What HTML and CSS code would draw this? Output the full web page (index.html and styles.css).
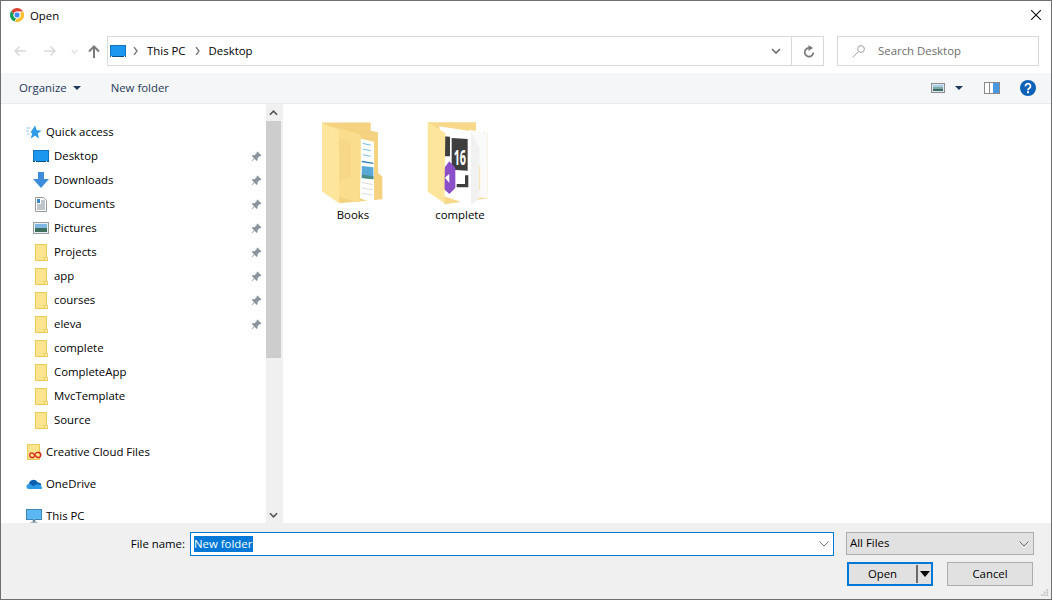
FILE: index.html
```html
<!doctype html>
<html>
<head>
  <meta charset="utf-8">
  <title>Open</title>
  <link rel="stylesheet" href="styles.css">
</head>
<body>
  <svg class="defs" width="0" height="0">
    <symbol id="folder" viewBox="0 0 14 17">
      <path d="M1.500.5h11v13.500h-2v2.500h-9z" fill="#fde48f" stroke="#ecc955"/>
      <path d="M10.500 16.500v-3h3v3z" fill="#fff3c4" stroke="#ecc955"/>
    </symbol>
    <symbol id="pin" viewBox="0 0 11 11">
      <path d="M6.500.5l4 4-1 .8-.8-.3-2.200 2.300.2 1.700-1 1-2.200-2.200-2.500 2.500-.5-.5 2.500-2.500-2.200-2.200 1-1 1.700.2 2.300-2.200-.3-.8z" fill="#8a949c"/>
    </symbol>
    <symbol id="chev" viewBox="0 0 10 6">
      <path d="M1 1l4 4 4-4" fill="none" stroke="#6a6a6a" stroke-width="1.600"/>
    </symbol>
    <symbol id="chev-thin" viewBox="0 0 10 6">
      <path d="M.5.5l4.500 4.500 4.500-4.500" fill="none" stroke="#707070"/>
    </symbol>
  </svg>

  <div class="window">
    <div class="titlebar">
      <svg class="chrome" width="14" height="14" viewBox="0 0 14 14">
        <path d="M7 0a7 7 0 0 1 6.100 3.500H7a3.500 3.500 0 0 0-3.300 2.400L1.300 2.900A7 7 0 0 1 7 0z" fill="#db4437"/>
        <path d="M1.300 2.900l2.400 3A3.500 3.500 0 0 0 6 10.400L4.400 13.500A7 7 0 0 1 1.300 2.900z" fill="#0f9d58"/>
        <path d="M13.100 3.500A7 7 0 0 1 5 13.700l2-3.200a3.500 3.500 0 0 0 3-5.600z" fill="#fbc02d"/>
        <circle cx="7" cy="7" r="3" fill="#4285f4" stroke="#fff" stroke-width=".8"/>
      </svg>
      <span class="title">Open</span>
      <svg class="close" width="10" height="10" viewBox="0 0 10 10">
        <path d="M0 0l10 10M10 0L0 10" stroke="#111" stroke-width="1.100"/>
      </svg>
    </div>

    <div class="navrow">
      <svg class="nav-btn back" width="12" height="12" viewBox="0 0 12 12"><path d="M12 6H1M5.500 1.500L1 6l4.500 4.500" fill="none" stroke="#d8d8d8" stroke-width="1.500"/></svg>
      <svg class="nav-btn forward" width="12" height="12" viewBox="0 0 12 12"><path d="M0 6h11M6.500 1.500L11 6l-4.500 4.500" fill="none" stroke="#d8d8d8" stroke-width="1.500"/></svg>
      <svg class="nav-btn recent" width="7" height="5" viewBox="0 0 10 6"><path d="M1 1l4 4 4-4" fill="none" stroke="#d8d8d8" stroke-width="1.600"/></svg>
      <svg class="nav-btn up" width="12" height="13" viewBox="0 0 12 13"><path d="M6 13V2M1 6.500L6 1.500l5 5" fill="none" stroke="#7a7a7a" stroke-width="2"/></svg>
      <div class="address">
        <svg class="pc-icon" width="16" height="12" viewBox="0 0 16 12">
          <rect width="16" height="12" fill="#1b97ef"/>
          <path d="M0 11.500h16" stroke="#0a4f86"/>
          <path d="M1 11.500h1M14 11.500h1" stroke="#fff"/>
          <path d="M0 0h16v1H0zM0 0h1v11H0zM15 0h1v11h-1z" fill="#1473bd"/>
        </svg>
        <svg class="crumb-sep" width="5" height="8" viewBox="0 0 5 8"><path d="M1 0l3 4-3 4" fill="none" stroke="#777" stroke-width="1.300"/></svg>
        <span class="crumb">This PC</span>
        <svg class="crumb-sep second" width="5" height="8" viewBox="0 0 5 8"><path d="M1 0l3 4-3 4" fill="none" stroke="#777" stroke-width="1.300"/></svg>
        <span class="crumb">Desktop</span>
        <svg class="addr-chev" width="10" height="6"><use href="#chev"/></svg>
        <div class="refresh">
          <svg width="12" height="13" viewBox="0 0 12 13"><path d="M7 3.100A4.300 4.300 0 1 0 10.300 7.500" fill="none" stroke="#777" stroke-width="1.700"/><path d="M5.500 0l4.500 3-4.500 3z" fill="#777"/></svg>
        </div>
      </div>
      <div class="search">
        <svg width="13" height="13" viewBox="0 0 13 13"><circle cx="9" cy="4" r="3.400" fill="none" stroke="#a0a0a0"/><path d="M6.500 6.500l-6 6" stroke="#b89c98"/></svg>
        <span>Search Desktop</span>
      </div>
    </div>

    <div class="toolbar">
      <span class="tool">Organize</span>
      <span class="caret"></span>
      <span class="tool new-folder">New folder</span>
      <svg class="view-icon" width="14" height="10" viewBox="0 0 14 10">
        <rect x=".5" y=".5" width="13" height="9" fill="#dce9f4" stroke="#8c8c8c"/>
        <rect x="2" y="2" width="10" height="2" fill="#a9cde9"/>
        <rect x="2" y="4" width="10" height="2" fill="#7fa9a0"/>
        <rect x="2" y="6" width="10" height="2" fill="#3d6a62"/>
      </svg>
      <span class="caret view-caret"></span>
      <svg class="pane-icon" width="16" height="12" viewBox="0 0 16 12">
        <rect x=".5" y=".5" width="15" height="11" fill="#fff" stroke="#8a8a8a"/>
        <rect x="9" y="1" width="6" height="10" fill="#4a98e2"/>
        <path d="M5.500 1v10" stroke="#8a8a8a"/>
      </svg>
      <svg class="help-icon" width="16" height="16" viewBox="0 0 16 16">
        <circle cx="8" cy="8" r="8" fill="#0d62b8"/>
        <path d="M5.500 6.200a2.500 2.500 0 1 1 3.800 2.100c-.8.500-1.300.9-1.300 1.900" fill="none" stroke="#fff" stroke-width="1.800"/>
        <rect x="7" y="11.200" width="2" height="2" fill="#fff"/>
      </svg>
    </div>

    <div class="main">
      <div class="sidebar">
        <div class="item top">
          <svg class="icon" width="16" height="15" viewBox="0 0 16 15"><path d="M9 .5l1.800 4.700 4.700.3-3.700 3 1.200 5-4-2.700-4.200 2.700 1.300-5-1.500-1.300z" fill="#2d9be8"/><path d="M.5 3h4M0 6h3M1 9h2.500" stroke="#8cc8f0"/></svg>
          <span>Quick access</span>
        </div>
        <div class="item child">
          <svg class="icon" width="16" height="12" viewBox="0 0 16 12"><rect width="16" height="12" fill="#1b97ef"/><path d="M0 11.500h16" stroke="#0a4f86"/><path d="M2 11.500h1M13 11.500h1" stroke="#fff"/><path d="M0 0h16v1H0zM0 0h1v11H0zM15 0h1v11h-1z" fill="#1473bd"/></svg>
          <span>Desktop</span>
          <svg class="pin" width="11" height="11"><use href="#pin"/></svg>
        </div>
        <div class="item child">
          <svg class="icon" width="16" height="16" viewBox="0 0 16 16"><path d="M5 0h6v7h5l-8 9-8-9h5z" fill="#3e8ddd"/></svg>
          <span>Downloads</span>
          <svg class="pin" width="11" height="11"><use href="#pin"/></svg>
        </div>
        <div class="item child">
          <svg class="icon" width="16" height="15" viewBox="0 0 16 15"><path d="M2.500.5h8l3 3v11h-11z" fill="#fff" stroke="#9a9a9a"/><path d="M8 4h4M8 6h4M4 8h8M4 10h8M4 12h8" stroke="#7d8a96"/><path d="M4 2h3v4H4z" fill="#3c84c8"/></svg>
          <span>Documents</span>
          <svg class="pin" width="11" height="11"><use href="#pin"/></svg>
        </div>
        <div class="item child">
          <svg class="icon" width="16" height="12" viewBox="0 0 16 12"><rect x=".5" y=".5" width="15" height="11" fill="#e4eff8" stroke="#9a9a9a"/><rect x="2" y="2" width="12" height="4" fill="#7fb6e2"/><rect x="2" y="6" width="12" height="4" fill="#3d6e5e"/></svg>
          <span>Pictures</span>
          <svg class="pin" width="11" height="11"><use href="#pin"/></svg>
        </div>
        <div class="item child">
          <svg class="icon" width="16" height="17"><use href="#folder"/></svg>
          <span>Projects</span>
          <svg class="pin" width="11" height="11"><use href="#pin"/></svg>
        </div>
        <div class="item child">
          <svg class="icon" width="16" height="17"><use href="#folder"/></svg>
          <span>app</span>
          <svg class="pin" width="11" height="11"><use href="#pin"/></svg>
        </div>
        <div class="item child">
          <svg class="icon" width="16" height="17"><use href="#folder"/></svg>
          <span>courses</span>
          <svg class="pin" width="11" height="11"><use href="#pin"/></svg>
        </div>
        <div class="item child">
          <svg class="icon" width="16" height="17"><use href="#folder"/></svg>
          <span>eleva</span>
          <svg class="pin" width="11" height="11"><use href="#pin"/></svg>
        </div>
        <div class="item child">
          <svg class="icon" width="16" height="17"><use href="#folder"/></svg>
          <span>complete</span>
        </div>
        <div class="item child">
          <svg class="icon" width="16" height="17"><use href="#folder"/></svg>
          <span>CompleteApp</span>
        </div>
        <div class="item child">
          <svg class="icon" width="16" height="17"><use href="#folder"/></svg>
          <span>MvcTemplate</span>
        </div>
        <div class="item child">
          <svg class="icon" width="16" height="17"><use href="#folder"/></svg>
          <span>Source</span>
        </div>
        <div class="item top group">
          <svg class="icon" width="16" height="16" viewBox="0 0 16 16"><path d="M1.500.5h12v15h-12z" fill="#fde48f" stroke="#ecc955"/><path d="M8 13.500H6a2.300 2.300 0 0 1 0-4.600c2 0 3.500 4.600 6 4.600a2.500 2.500 0 0 0 .5-5c-2.500-.3-4 2-4.500 5" fill="none" stroke="#d8281c" stroke-width="1.300"/></svg>
          <span>Creative Cloud Files</span>
        </div>
        <div class="item top group">
          <svg class="icon" width="16" height="10" viewBox="0 0 16 10"><path d="M3 5.500a4.600 4.600 0 0 1 8.800-2A3.200 3.200 0 0 1 15.500 6L8 8z" fill="#0b5fb0"/><path d="M3 10a2.500 2.500 0 0 1 0-5c1.500 0 3 1 4.500 2.500C9 6 11 5 13 5.500c2 .5 3 2 3 3.300 0 .8-.4 1.200-1 1.200z" fill="#2a9be4"/></svg>
          <span>OneDrive</span>
        </div>
        <div class="item top group">
          <svg class="icon" width="16" height="15" viewBox="0 0 16 15"><rect x=".5" y=".5" width="15" height="10" fill="#5cb8f2" stroke="#3d87b8"/><path d="M4.500 13.500h7M7 11h2v2H7z" stroke="#9bb2c4"/></svg>
          <span>This PC</span>
        </div>
      </div>

      <div class="scrollbar">
        <svg class="scroll-arrow" width="9" height="6" viewBox="0 0 10 6"><path d="M1 5l4-4 4 4" fill="none" stroke="#555" stroke-width="1.800"/></svg>
        <div class="thumb"></div>
        <svg class="scroll-arrow down" width="9" height="6" viewBox="0 0 10 6"><path d="M1 1l4 4 4-4" fill="none" stroke="#555" stroke-width="1.800"/></svg>
      </div>

      <div class="files">
        <div class="file">
          <svg width="63" height="84" viewBox="63 36 190 252">
            <path d="M63 37h147v25l22 4v124l13 10v68l-130 12z" fill="#f4d27f"/>
            <path d="M178 85l42 10v185l-42-15z" fill="#fff"/>
            <path d="M186 100l24 5M186 117l24 5M186 134l24 5" stroke="#6fc0ea" stroke-width="3"/>
            <path d="M183 152l35 6v4l-35-5z" fill="#2f7fb8"/>
            <path d="M183 168l35 4v36l-35-4z" fill="#58a9d8"/>
            <path d="M183 194l35 5v9l-35-4z" fill="#4b8f88"/>
            <path d="M183 218l33 6M183 234l33 6M183 250l33 6" stroke="#c9c9c9" stroke-width="2"/>
            <path d="M90 48l90 25v87l-4 118-61-16z" fill="#fbdd8e"/>
            <path d="M115 84l35 10v106l-35 15z" fill="#f7d888"/>
            <path d="M63 37l50 24 2 219-52-35z" fill="#fee59c"/>
          </svg>
          <span>Books</span>
        </div>
        <div class="file">
          <svg width="66" height="84" viewBox="383 36 198 252">
            <path d="M385 37h145v27l35 5v196l-130 18z" fill="#f7d88a"/>
            <path d="M510 59l55 10v195l-50-2z" fill="#fafafa"/>
            <path d="M420 49l95 15v222l-80-27z" fill="#fff"/>
            <path d="M515 64l25 50v150l-25 22z" fill="#f1f1f1"/>
            <path d="M541 170v70" stroke="#f5e3a8" stroke-width="3"/>
            <path d="M432 79l20 1v59h-20z" fill="#3e3e3e"/>
            <path d="M457 84l48 3v95l-48-3z" fill="#3e3e3e"/>
            <text class="tile-num" x="463" y="165" textLength="37" lengthAdjust="spacingAndGlyphs">16</text>
            <path d="M497 196h10v36h-35v-10h25z" fill="#3e3e3e"/>
            <path d="M433 176l17-22 18 20v60l-18 18-17-16z" fill="#8a4fc9"/>
            <path d="M437 203l13-12v28z" fill="#fff"/>
            <path d="M385 37l53 32-3 210-50-34z" fill="#fee59c"/>
          </svg>
          <span>complete</span>
        </div>
      </div>
    </div>

    <div class="footer">
      <div class="name-row">
        <label class="name-label">File name:</label>
        <div class="name-input">
          <span class="selected">New folder</span>
          <svg width="10" height="6"><use href="#chev-thin"/></svg>
        </div>
        <div class="type-select">
          <span>All Files</span>
          <svg width="10" height="6"><use href="#chev-thin"/></svg>
        </div>
      </div>
      <div class="button-row">
        <div class="btn open">
          <span class="open-text">Open</span>
          <span class="open-split"></span>
          <span class="open-caret"></span>
        </div>
        <div class="btn cancel"><span>Cancel</span></div>
      </div>
      <svg class="grip" width="9" height="9" viewBox="0 0 10 10">
        <path d="M7 1h2v2H7zM4 4h2v2H4zM7 4h2v2H7zM1 7h2v2H1zM4 7h2v2H4zM7 7h2v2H7z" fill="#c4c4c4"/>
      </svg>
    </div>
  </div>
</body>
</html>
```

FILE: styles.css
```css
* {
  box-sizing: border-box;
}
html, body {
  margin: 0;
  height: 100%;
}
body {
  font-family: "Open Sans", "Noto Sans", sans-serif;
  font-size: 11.4px;
  color: #000;
  background: #fff;
  overflow: hidden;
}
.defs {
  display: block;
  height: 0;
}
svg {
  flex: none;
  display: block;
}

/* Open Sans sits a little low compared to the system font */
.title,
.crumb,
.search span,
.tool,
.item span,
.name-label,
.type-select span,
.btn span.open-text,
.cancel span {
  margin-bottom: 2px;
}

.window {
  height: 600px;
  display: flex;
  flex-direction: column;
  border: 1px solid #6f6f6f;
  background: #fff;
}

/* title */
.titlebar {
  height: 30px;
  display: flex;
  align-items: center;
  padding: 0 10px 0 9px;
  flex: none;
}
.chrome {
  margin-bottom: 2px;
}
.title {
  margin-left: 6px;
}
.close {
  margin-left: auto;
  margin-bottom: 2px;
}

/* back, forward, address, search */
.navrow {
  display: flex;
  align-items: center;
  height: 30px;
  margin: 5px 12px 7px 0;
  flex: none;
}
.back {
  margin-left: 13px;
}
.forward {
  margin-left: 18px;
}
.recent {
  margin-left: 15px;
}
.up {
  margin-left: 10px;
}
.address {
  width: 717px;
  height: 30px;
  margin-left: 7px;
  display: flex;
  align-items: center;
  border: 1px solid #d9d9d9;
  padding-left: 2px;
}
.crumb-sep {
  margin: 0 9px 0 7px;
}
.crumb-sep.second {
  margin-left: 9px;
}
.addr-chev {
  margin-left: auto;
  margin-right: 10px;
}
.refresh {
  width: 32px;
  height: 28px;
  padding-left: 2px;
  border-left: 1px solid #d9d9d9;
  display: flex;
  align-items: center;
  justify-content: center;
}
.search {
  margin-left: 13px;
  width: 202px;
  height: 30px;
  border: 1px solid #d9d9d9;
  display: flex;
  align-items: center;
  padding-left: 14px;
  gap: 13px;
  color: #6d6d6d;
}

/* command bar */
.toolbar {
  height: 31px;
  background: #f5f6f7;
  border-bottom: 1px solid #e9eaeb;
  display: flex;
  align-items: center;
  padding-left: 18px;
  flex: none;
}
.tool {
  color: #1e395b;
}
.caret {
  width: 0;
  height: 0;
  margin-left: 6px;
  border-left: 4px solid transparent;
  border-right: 4px solid transparent;
  border-top: 4px solid #1e395b;
}
.new-folder {
  margin-left: 30px;
}
.view-icon {
  margin-left: auto;
}
.view-caret {
  margin-left: 10px;
}
.pane-icon {
  margin-left: 21px;
}
.help-icon {
  margin-left: 20px;
  margin-right: 15px;
}

/* tree and file area */
.main {
  flex: 1;
  min-height: 0;
  display: flex;
}
.sidebar {
  width: 265px;
  padding-top: 16px;
  overflow: hidden;
  flex: none;
}
.item {
  height: 24px;
  display: flex;
  align-items: center;
  gap: 5px;
  padding-right: 4px;
}
.item.top {
  padding-left: 25px;
  gap: 4px;
}
.item.child {
  padding-left: 32px;
}
.item.group {
  margin-top: 8px;
}
.icon {
  width: 16px;
}
.pin {
  margin-left: auto;
}
.scrollbar {
  width: 15px;
  background: #f0f0f0;
  flex: none;
  display: flex;
  flex-direction: column;
  align-items: center;
  padding-top: 6px;
}
.thumb {
  width: 15px;
  height: 237px;
  margin-top: 5px;
  background: #cdcdcd;
}
.scroll-arrow.down {
  margin-top: auto;
  margin-bottom: 5px;
}
.files {
  flex: 1;
  border-left: 2px solid #f0f0f0;
  display: flex;
  gap: 7px;
  padding: 18px 0 0 20px;
  align-items: flex-start;
}
.file {
  width: 100px;
  display: flex;
  flex-direction: column;
  align-items: center;
}
.file span {
  margin-top: 1px;
}
.tile-num {
  font-family: "Open Sans", sans-serif;
  font-size: 62px;
  font-weight: 700;
  fill: #fff;
}

/* bottom part */
.footer {
  height: 76px;
  background: #f0f0f0;
  padding: 9px 18px 0 0;
  position: relative;
  flex: none;
}
.name-row {
  display: flex;
  align-items: center;
  height: 24px;
}
.name-label {
  width: 184px;
  flex: none;
  text-align: right;
}
.name-input {
  width: 644px;
  height: 24px;
  flex: none;
  margin-left: 5px;
  border: 1px solid #0078d7;
  background: #fff;
  display: flex;
  align-items: center;
  justify-content: space-between;
  padding: 0 4px 0 3px;
}
.selected {
  background: #0078d7;
  color: #fff;
  line-height: 16px;
  padding-right: 1px;
}
.type-select {
  width: 188px;
  height: 23px;
  margin-left: 12px;
  flex: none;
  align-self: flex-start;
  border: 1px solid #adadad;
  background: #e1e1e1;
  display: flex;
  align-items: center;
  justify-content: space-between;
  padding: 0 4px 0 3px;
}
.button-row {
  display: flex;
  justify-content: flex-end;
  gap: 14px;
  margin-top: 6px;
}
.btn {
  height: 24px;
  background: #e1e1e1;
  border: 1px solid #adadad;
  display: flex;
  align-items: center;
  justify-content: center;
}
.open {
  width: 86px;
  border: 2px solid #0078d7;
}
.open-text {
  flex: 1;
  text-align: center;
}
.open-split {
  width: 2px;
  height: 18px;
  background: #6a6a6a;
}
.open-caret {
  width: 0;
  height: 0;
  margin: 0 1px 0 2px;
  border-left: 5px solid transparent;
  border-right: 5px solid transparent;
  border-top: 6px solid #000;
}
.cancel {
  width: 86px;
}
.grip {
  position: absolute;
  right: 2px;
  bottom: 2px;
}
```
